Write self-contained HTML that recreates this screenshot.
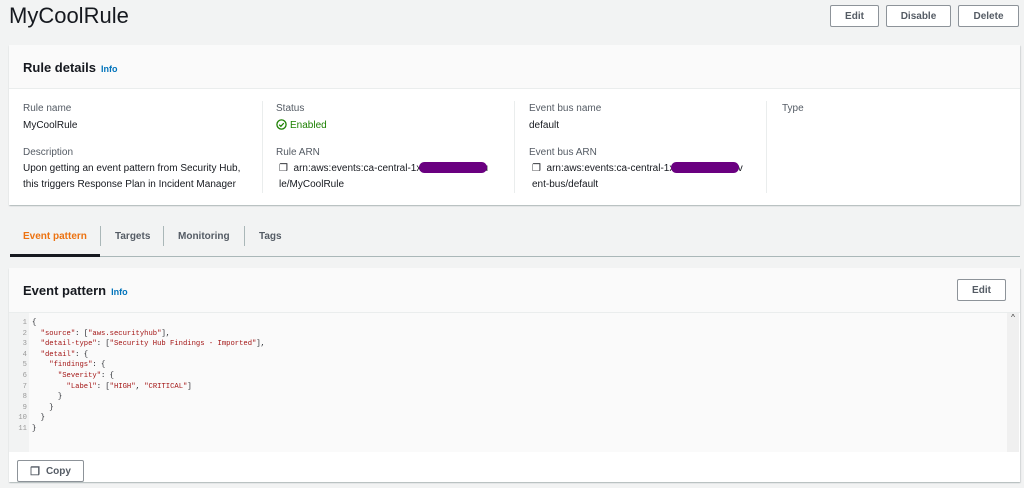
<!DOCTYPE html>
<html><head><style>
*{box-sizing:border-box;margin:0;padding:0}
body{width:1024px;height:488px;background:#f2f3f3;font-family:"Liberation Sans",sans-serif;color:#16191f;position:relative;overflow:hidden;font-size:10px}
.abs{position:absolute}
.btn{position:absolute;height:22px;border:1px solid #8d9399;border-radius:2px;background:#fff;font-weight:bold;font-size:10px;color:#545b64;display:flex;align-items:center;justify-content:center}
.card{position:absolute;background:#fff;box-shadow:0 1px 1px rgba(0,28,36,.2),1px 1px 1px rgba(0,28,36,.1)}
.hdr{position:absolute;left:0;right:0;top:0;background:#fafafa;border-bottom:1px solid #eaeded}
.h2{position:absolute;font-weight:bold;font-size:13px;color:#16191f}
.info{color:#0073bb;font-size:9px;font-weight:bold;margin-left:5px}
.lbl{position:absolute;color:#545b64;font-size:10px}
.val{position:absolute;color:#16191f;font-size:10px;line-height:16px}
.sep{position:absolute;width:1px;background:#eaeded}
.tab{position:absolute;top:231px;font-weight:bold;font-size:10px;color:#545b64}
.code{font-family:"Liberation Mono",monospace;font-size:7.2px;line-height:10.6px;white-space:pre}
.s{color:#a31515}.k{color:#a31515}
.red{background:#6a0080;border-radius:6px;position:absolute;height:11px}
</style></head><body>
<div class="abs" style="left:9px;top:3px;font-size:22px;color:#16191f">MyCoolRule</div>
<div class="btn" style="left:830px;top:5px;width:49px">Edit</div>
<div class="btn" style="left:886px;top:5px;width:65px">Disable</div>
<div class="btn" style="left:958px;top:5px;width:61px">Delete</div>

<div class="card" style="left:9px;top:45px;width:1011px;height:160px">
 <div class="hdr" style="height:44px"></div>
 <div class="h2" style="left:14px;top:15px">Rule details<span class="info">Info</span></div>
 <div class="sep" style="left:253px;top:56px;height:92px"></div>
 <div class="sep" style="left:505px;top:56px;height:92px"></div>
 <div class="sep" style="left:757px;top:56px;height:92px"></div>
 <div class="lbl" style="left:14px;top:58px">Rule name</div>
 <div class="val" style="left:14px;top:73px">MyCoolRule</div>
 <div class="lbl" style="left:14px;top:102px">Description</div>
 <div class="val" style="left:14px;top:116px">Upon getting an event pattern from Security Hub,<br>this triggers Response Plan in Incident Manager</div>
 <div class="lbl" style="left:267px;top:58px">Status</div>
 <div class="val" style="left:267px;top:73px;color:#1d8102"><svg width="11" height="11" viewBox="0 0 12 12" style="vertical-align:-2px;margin-right:3px"><circle cx="6" cy="6" r="5" fill="none" stroke="#1d8102" stroke-width="1.4"/><path d="M3.5 6.2l1.8 1.8 3.2-3.5" fill="none" stroke="#1d8102" stroke-width="1.4"/></svg>Enabled</div>
 <div class="lbl" style="left:267px;top:102px">Rule ARN</div>
 <div class="val" style="left:270px;top:116px">&#x2750;&nbsp; arn:aws:events:ca-central-1xxxxxxxxxxxx:ru<br>le/MyCoolRule</div>
 <div class="red" style="left:410px;top:117px;width:68px"></div>
 <div class="lbl" style="left:520px;top:58px">Event bus name</div>
 <div class="val" style="left:520px;top:73px">default</div>
 <div class="lbl" style="left:520px;top:102px">Event bus ARN</div>
 <div class="val" style="left:523px;top:116px">&#x2750;&nbsp; arn:aws:events:ca-central-1xxxxxxxxxxxx:ev<br>ent-bus/default</div>
 <div class="red" style="left:662px;top:117px;width:68px"></div>
 <div class="lbl" style="left:773px;top:58px">Type</div>
</div>

<div class="abs" style="left:10px;top:256px;width:1010px;height:1px;background:#aab7b8"></div>
<div class="abs" style="left:10px;top:254px;width:90px;height:3px;background:#16191f"></div>
<div class="abs" style="left:100px;top:226px;width:1px;height:20px;background:#aab7b8"></div>
<div class="abs" style="left:163px;top:226px;width:1px;height:20px;background:#aab7b8"></div>
<div class="abs" style="left:244px;top:226px;width:1px;height:20px;background:#aab7b8"></div>
<div class="tab" style="left:23px;color:#ec7211">Event pattern</div>
<div class="tab" style="left:115px">Targets</div>
<div class="tab" style="left:178px">Monitoring</div>
<div class="tab" style="left:259px">Tags</div>

<div class="card" style="left:9px;top:268px;width:1011px;height:214px">
 <div class="hdr" style="height:45px"></div>
 <div class="h2" style="left:14px;top:15px">Event pattern<span class="info">Info</span></div>
 <div class="btn" style="left:948px;top:11px;width:49px">Edit</div>
 <div class="abs" style="left:0;top:45px;width:998px;height:139px;background:#fafafa"></div>
 <div class="abs" style="left:0;top:45px;width:20px;height:139px;background:#f2f3f3"></div>
 <div class="abs" style="left:998px;top:45px;width:12px;height:139px;background:#f0f0f0;font-size:8px;text-align:center;color:#333">^</div>
 <div class="abs code" style="left:0;top:50px;width:18px;text-align:right;color:#999">1
2
3
4
5
6
7
8
9
10
11</div>
 <div class="abs code" style="left:23px;top:50px;color:#16191f">{
  <span class="k">"source"</span>: [<span class="s">"aws.securityhub"</span>],
  <span class="k">"detail-type"</span>: [<span class="s">"Security Hub Findings - Imported"</span>],
  <span class="k">"detail"</span>: {
    <span class="k">"findings"</span>: {
      <span class="k">"Severity"</span>: {
        <span class="k">"Label"</span>: [<span class="s">"HIGH"</span>, <span class="s">"CRITICAL"</span>]
      }
    }
  }
}</div>
 <div class="btn" style="left:8px;top:192px;width:67px;color:#545b64"><span style="font-size:11px;margin-right:6px">&#x2750;</span>Copy</div>
</div>
</body></html>
